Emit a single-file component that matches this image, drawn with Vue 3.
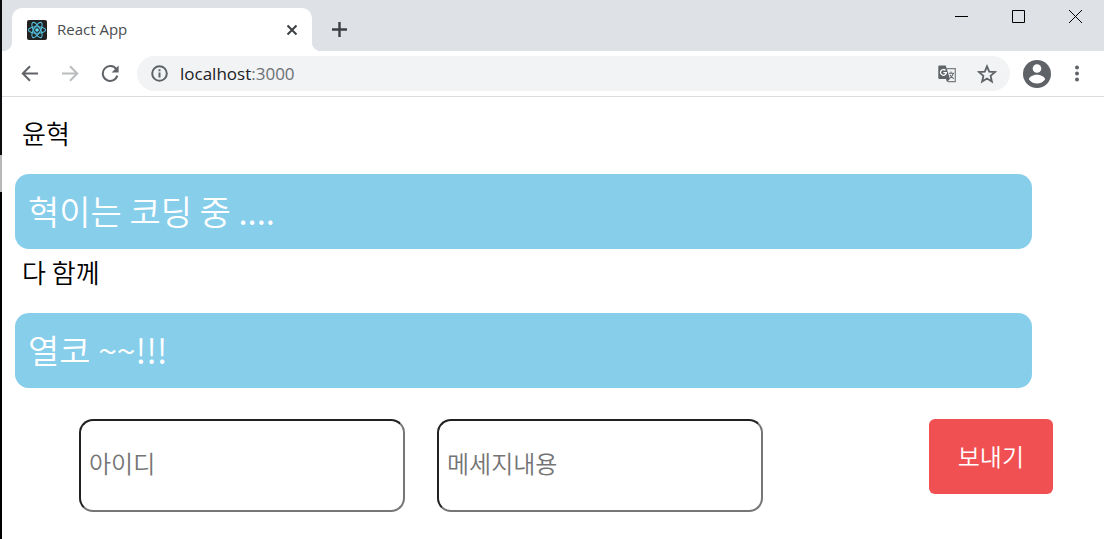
<script setup>
import { ref } from 'vue'

const address = ref('localhost:3000')
const userId = ref('')
const content = ref('')
const messages = ref([
  { name: '윤혁', text: '혁이는 코딩 중 ....' },
  { name: '다 함께', text: '열코 ~~!!!' },
])

function send() {
  if (!userId.value || !content.value) return
  messages.value.push({ name: userId.value, text: content.value })
  content.value = ''
}
</script>

<template>
  <div class="window">
    <header class="tabs">
      <div class="tab">
        <svg class="favicon" width="20" height="20" viewBox="0 0 20 20" aria-hidden="true">
          <rect width="20" height="20" rx="2" fill="#222222" />
          <g fill="none" stroke="#53c1de" stroke-width="1.1">
            <ellipse cx="10" cy="10" rx="8.600" ry="3.300" />
            <ellipse cx="10" cy="10" rx="8.600" ry="3.300" transform="rotate(60 10 10)" />
            <ellipse cx="10" cy="10" rx="8.600" ry="3.300" transform="rotate(120 10 10)" />
          </g>
          <circle cx="10" cy="10" r="1.800" fill="#61dafb" />
        </svg>
        <span class="title">React App</span>
        <button class="icon" type="button" aria-label="Close tab">
          <svg width="12" height="12" viewBox="0 0 12 12"><path d="M1.500 1.500l9 9M10.500 1.500l-9 9" stroke="#3c4043" stroke-width="2" /></svg>
        </button>
      </div>
      <button class="icon add" type="button" aria-label="New tab">
        <svg width="16" height="16" viewBox="0 0 16 16"><path d="M7.500 0v15M0 7.500h15" stroke="#3c4043" stroke-width="2.400" /></svg>
      </button>
      <div class="controls">
        <button class="icon" type="button" aria-label="Minimize">
          <svg width="13" height="13" viewBox="0 0 13 13"><path d="M0 6.500h13" stroke="#000" /></svg>
        </button>
        <button class="icon" type="button" aria-label="Maximize">
          <svg width="13" height="13" viewBox="0 0 13 13"><path d="M.5.5h12v12H.5z" fill="none" stroke="#000" /></svg>
        </button>
        <button class="icon" type="button" aria-label="Close">
          <svg width="13" height="13" viewBox="0 0 13 13"><path d="M0 0l13 13M13 0L0 13" stroke="#000" /></svg>
        </button>
      </div>
    </header>

    <nav class="toolbar">
      <button class="icon" type="button" aria-label="Back">
        <svg width="18" height="18" viewBox="0 0 18 18"><path d="M17 8.500H2M9 1.300L1.800 8.500 9 15.700" fill="none" stroke="#5f6368" stroke-width="2" /></svg>
      </button>
      <button class="icon" type="button" aria-label="Forward">
        <svg width="18" height="18" viewBox="0 0 18 18"><path d="M1 8.500h15M9 1.300L16.200 8.500 9 15.700" fill="none" stroke="#babcbe" stroke-width="2" /></svg>
      </button>
      <button class="icon" type="button" aria-label="Reload">
        <svg width="18" height="18" viewBox="0 0 18 18"><path d="M15.400 4.400A7.400 7.400 0 1 0 16.300 10.600" fill="none" stroke="#5f6368" stroke-width="2" /><path d="M17.600.6v7h-7z" fill="#5f6368" /></svg>
      </button>
      <div class="omnibox">
        <svg width="17" height="17" viewBox="0 0 17 17" aria-hidden="true">
          <circle cx="8.500" cy="8.500" r="7.300" fill="none" stroke="#5f6368" stroke-width="2" />
          <path d="M8.500 7.500v5M8.500 4.300v2" stroke="#5f6368" stroke-width="2" />
        </svg>
        <a class="address" href="#" :aria-label="address">localhost<span>:3000</span></a>
        <button class="icon" type="button" aria-label="Translate">
          <svg width="19" height="18" viewBox="0 0 19 18">
            <path d="M8.500 3.600h8.800v13H10" fill="none" stroke="#7b7e82" stroke-width="1.200" />
            <path d="M1.500.500h6.200L12 14H1.500A1.200 1.200 0 0 1 .300 12.800V1.700A1.200 1.200 0 0 1 1.500.500z" fill="#5f6368" />
            <path d="M8 14h3.800L9 17.200z" fill="#5f6368" />
            <path d="M7.500 5.400a2.900 2.900 0 1 0 .800 2.200H5.400" fill="none" stroke="#fff" stroke-width="1.300" />
            <path d="M10.800 8.200h5.400M13 6.600v1.600M15.200 8.400c-.5 2.400-1.800 3.900-3.300 5M12 9.700c.8 1.600 2 2.800 3.700 4" fill="none" stroke="#6b6f73" stroke-width="1.100" />
          </svg>
        </button>
        <button class="icon" type="button" aria-label="Bookmark">
          <svg width="20" height="20" viewBox="0 0 20 20"><path d="M10 2.300l2.200 5.300 5.800.5-4.400 3.800 1.300 5.600-4.900-3-4.900 3 1.300-5.600L2 8.100l5.800-.5z" fill="none" stroke="#5f6368" stroke-width="1.800" /></svg>
        </button>
      </div>
      <button class="icon" type="button" aria-label="Profile">
        <svg width="28" height="28" viewBox="0 0 28 28">
          <circle cx="14" cy="14" r="14" fill="#5f6368" />
          <circle cx="14" cy="8.500" r="4.300" fill="#fff" />
          <path d="M5.800 19.300c1-3 4.600-4.500 8.200-4.500s7.200 1.500 8.200 4.500c-1.900 2.800-4.900 4.300-8.200 4.300s-6.300-1.500-8.200-4.300z" fill="#fff" />
        </svg>
      </button>
      <button class="icon" type="button" aria-label="Menu">
        <svg width="4" height="18" viewBox="0 0 4 18" fill="#5f6368"><circle cx="2" cy="2.500" r="2" /><circle cx="2" cy="8.500" r="2" /><circle cx="2" cy="14.500" r="2" /></svg>
      </button>
    </nav>

    <main class="page">
      <section v-for="(message, i) in messages" :key="i" class="message">
        <h2 class="name">{{ message.name }}</h2>
        <p class="bubble">{{ message.text }}</p>
      </section>
      <form class="form" @submit.prevent="send">
        <input v-model="userId" type="text" placeholder="아이디" aria-label="아이디" />
        <input v-model="content" type="text" placeholder="메세지내용" aria-label="메세지내용" />
        <button class="send" type="submit">보내기</button>
      </form>
    </main>
  </div>
</template>

<style>
body {
  background: #fff;
}
</style>

<style scoped>
.window {
  box-sizing: border-box;
  min-height: 100vh;
  padding-left: 2px;
  background:
    linear-gradient(#0c0c0e 155px, #b8b8b8 155px 192px, #000 192px) left / 2px 100% no-repeat,
    #fff;
  color: #000;
  font-family: "Noto Sans CJK KR", sans-serif;
  font-weight: 350;
}

.icon {
  display: flex;
  flex: none;
  padding: 0;
  border: 0;
  background: none;
}

.tabs {
  display: flex;
  align-items: flex-end;
  height: 51px;
  padding-left: 10px;
  background: #dee1e6;
}

.tab {
  position: relative;
  display: flex;
  align-items: center;
  box-sizing: border-box;
  width: 300px;
  height: 43px;
  padding: 0 14px 0 15px;
  border-radius: 10px 10px 0 0;
  background: #fff;
}

.tab::before,
.tab::after {
  content: "";
  position: absolute;
  bottom: 0;
  width: 10px;
  height: 10px;
}

.tab::before {
  right: 100%;
  background: radial-gradient(circle at 0 0, #dee1e6 10px, #fff 11px);
}

.tab::after {
  left: 100%;
  background: radial-gradient(circle at 100% 0, #dee1e6 10px, #fff 11px);
}

.title {
  flex: 1;
  margin-left: 10px;
  padding-bottom: 2px;
  color: #4a4d51;
  font-family: "Open Sans", sans-serif;
  font-size: 15px;
  font-weight: 400;
  line-height: 20px;
}

.add {
  margin: 0 0 13px 20px;
}

.controls {
  display: flex;
  align-self: flex-start;
  gap: 44px;
  margin: 10px 22px 0 auto;
}

.toolbar {
  display: flex;
  align-items: center;
  height: 45px;
  padding: 0 25px 0 19px;
  border-bottom: 1px solid #dadce0;
}

.toolbar > .icon + .icon {
  margin-left: 22px;
}

.omnibox {
  display: flex;
  flex: 1;
  align-items: center;
  height: 35px;
  margin: 0 13px 0 18px;
  padding: 0 13px 0 14px;
  border-radius: 18px;
  background: #f1f3f4;
}

.toolbar > .omnibox ~ .icon + .icon {
  margin-left: 24px;
}

.address {
  flex: 1;
  margin-left: 12px;
  color: #202124;
  font-family: "Open Sans", sans-serif;
  font-size: 17px;
  font-weight: 400;
  line-height: 24px;
  text-decoration: none;
}

.address span {
  color: #6b6f74;
}

.omnibox .icon + .icon {
  margin-left: 20px;
}

.page {
  padding: 8px 72px 28px 13px;
}

.name {
  margin: 0;
  padding: 8px 7px 21px;
  font-size: 26px;
  font-weight: inherit;
  line-height: 40px;
}

.message + .message .name {
  padding-top: 3px;
}

.bubble {
  margin: 0;
  padding: 12px 13px 14px;
  border-radius: 14px;
  background: #87ceeb;
  color: #fff;
  font-size: 34px;
  line-height: 49px;
}

.form {
  display: flex;
  align-items: flex-start;
  gap: 32px;
  margin: 31px -21px 0 64px;
}

.form input {
  box-sizing: border-box;
  flex: 0 1 326px;
  min-width: 0;
  height: 93px;
  padding: 0 8px 6px;
  border: 2px inset #767676;
  border-radius: 14px;
  background: #fff;
  color: #000;
  font: inherit;
  font-size: 24px;
}

.form input::placeholder {
  color: #757575;
}

.send {
  flex: none;
  height: 75px;
  margin-left: auto;
  padding: 0 29px 2px;
  border: 0;
  border-radius: 6px;
  background: #f05052;
  color: #fff;
  font: inherit;
  font-size: 24px;
}
</style>
